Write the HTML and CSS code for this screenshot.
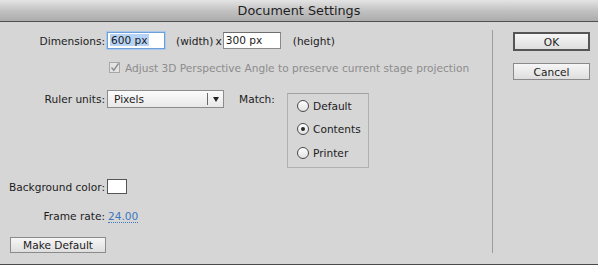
FILE: index.html
```html
<!doctype html>
<html>
  <head>
    <meta charset="UTF-8" />
    <title>Document Settings</title>
    <link rel="stylesheet" href="styles.css">
  </head>
  <body>
    <div class="dialog">
      <div class="titlebar">Document Settings</div>
      <div class="content">
        <div class="main">
          <div class="row row-dims">
            <span class="label">Dimensions:</span>
            <div class="field focused"><span class="selected">600 px</span></div>
            <span class="unit">(width)</span><span class="times">x</span>
            <div class="field">300 px</div>
            <span class="unit unit-h">(height)</span>
          </div>

          <div class="row row-check">
            <span class="label"></span>
            <span class="checkbox">
              <svg width="11" height="11" viewBox="0 0 11 11">
                <rect x="0.5" y="0.5" width="10" height="10" fill="#e4e4e4" stroke="#a8a8a8" />
                <path d="M2.5 5.5 L4.8 8.2 L9.6 1.4" fill="none" stroke="#8e8e8e" stroke-width="1.5" />
              </svg>
            </span>
            <span class="disabled-text">Adjust 3D Perspective Angle to preserve current stage projection</span>
          </div>

          <div class="row row-ruler">
            <span class="label">Ruler units:</span>
            <div class="select">
              <span class="select-value">Pixels</span>
              <span class="select-arrow"></span>
            </div>
            <span class="match-label">Match:</span>
            <div class="radio-group">
              <label class="radio"><span class="dot"></span>Default</label>
              <label class="radio checked"><span class="dot"></span>Contents</label>
              <label class="radio"><span class="dot"></span>Printer</label>
            </div>
          </div>

          <div class="row row-bg">
            <span class="label">Background color:</span>
            <span class="swatch"></span>
          </div>

          <div class="row row-fps">
            <span class="label">Frame rate:</span>
            <span class="hot-text">24.00</span>
          </div>

          <div class="row row-default">
            <button type="button" class="btn btn-default">Make Default</button>
          </div>
        </div>

        <div class="side">
          <button type="button" class="btn btn-ok">OK</button>
          <button type="button" class="btn btn-cancel">Cancel</button>
        </div>
      </div>
    </div>
  </body>
</html>
```

FILE: styles.css
```css
* {
  box-sizing: border-box;
}

body {
  margin: 0;
  background: #d6d6d6;
  font-family: "DejaVu Sans", Verdana, sans-serif;
  font-size: 10.6px;
  color: #1c1c1c;
}

.dialog {
  width: 598px;
  height: 265px;
  display: flex;
  flex-direction: column;
  border-bottom: 1px solid #4a4a4a;
}

.titlebar {
  height: 22px;
  line-height: 21px;
  text-align: center;
  font-size: 12.8px;
  color: #1e1e1e;
  background: linear-gradient(to bottom, #e4e4e4, #c2c2c2 50%, #acacac);
  border-bottom: 1px solid #505050;
}

.content {
  flex: 1;
  display: flex;
}

.main {
  flex: 1;
  padding-left: 8px;
  padding-top: 9px;
}

.side {
  width: 106px;
  border-left: 1px solid #9c9c9c;
  margin: 8px 0 11px;
  display: flex;
  flex-direction: column;
  align-items: flex-end;
  padding-right: 8px;
  padding-top: 1px;
}

.row {
  display: flex;
  align-items: center;
}

.label {
  width: 97px;
  flex: none;
  text-align: right;
  margin-right: 2px;
  white-space: nowrap;
}

/* Dimensions */
.row-dims {
  height: 19px;
}

.field {
  width: 58px;
  height: 17px;
  line-height: 15px;
  padding-left: 2px;
  background: #fff;
  border: 1px solid #8a8a8a;
  border-top-color: #6e6e6e;
}

.field.focused {
  border-color: #6f9fd8;
  box-shadow: 0 0 0 1px #a9c8ec;
}

.selected {
  background: #b6d3f5;
  padding: 0 1px;
}

.unit {
  margin-left: 11px;
}

.times {
  margin-left: 2px;
  margin-right: 1px;
}

.unit-h {
  margin-left: 12px;
}

/* Checkbox */
.row-check {
  height: 18px;
  margin-top: 9px;
}

.checkbox {
  width: 11px;
  height: 11px;
  margin-left: 2px;
  margin-top: -1px;
  display: flex;
}

.disabled-text {
  margin-left: 5px;
  color: #8c8c8c;
  white-space: nowrap;
}

/* Ruler units */
.row-ruler {
  margin-top: 13px;
  align-items: flex-start;
}

.row-ruler .label {
  line-height: 18px;
}

.select {
  width: 117px;
  height: 18px;
  display: flex;
  align-items: center;
  border: 1px solid #8c8c8c;
  background: linear-gradient(to bottom, #fbfbfb, #e8e8e8);
}

.select-value {
  flex: 1;
  padding-left: 6px;
}

.select-arrow {
  width: 16px;
  height: 12px;
  border-left: 1px solid #6a6a6a;
  display: flex;
  align-items: center;
  justify-content: center;
}

.select-arrow::after {
  content: "";
  border-left: 3.5px solid transparent;
  border-right: 3.5px solid transparent;
  border-top: 5px solid #222;
  margin-left: 1px;
}

.match-label {
  width: 48px;
  margin-left: 15px;
  line-height: 18px;
}

.radio-group {
  margin-top: 3px;
  width: 82px;
  height: 75px;
  border: 1px solid #b0b0b0;
  border-top-color: #a2a2a2;
  padding: 0 0 0 9px;
  display: flex;
  flex-direction: column;
}

.radio {
  display: flex;
  align-items: center;
  height: 23.5px;
}

.dot {
  width: 12px;
  height: 12px;
  border-radius: 50%;
  border: 1px solid #4a4a4a;
  background: linear-gradient(to bottom, #ffffff, #e2e2e2);
  margin-right: 4px;
  display: flex;
  align-items: center;
  justify-content: center;
}

.checked .dot::after {
  content: "";
  width: 4px;
  height: 4px;
  border-radius: 50%;
  background: #2a2a2a;
}

/* Background color */
.row-bg {
  margin-top: 11px;
  height: 15px;
}

.swatch {
  width: 20px;
  height: 15px;
  background: #fff;
  border: 1px solid #555;
}

/* Frame rate */
.row-fps {
  margin-top: 14px;
  height: 16px;
}

.hot-text {
  margin-left: 1px;
  color: #3c76bd;
  border-bottom: 1px dotted #3c76bd;
  line-height: 12px;
}

/* Buttons */
.row-default {
  margin-top: 13px;
  padding-left: 2px;
}

.btn {
  font-family: inherit;
  font-size: 10.6px;
  color: #1c1c1c;
  background: linear-gradient(to bottom, #f6f6f6, #dedede);
  border: 1px solid #8a8a8a;
  padding: 0;
  cursor: pointer;
}

.btn-default {
  width: 96px;
  height: 16px;
  line-height: 14px;
}

.btn-ok {
  width: 77px;
  height: 19px;
  border: 2px solid #555;
  margin-top: 1px;
}

.btn-cancel {
  width: 77px;
  height: 17px;
  margin-top: 12px;
}
```
